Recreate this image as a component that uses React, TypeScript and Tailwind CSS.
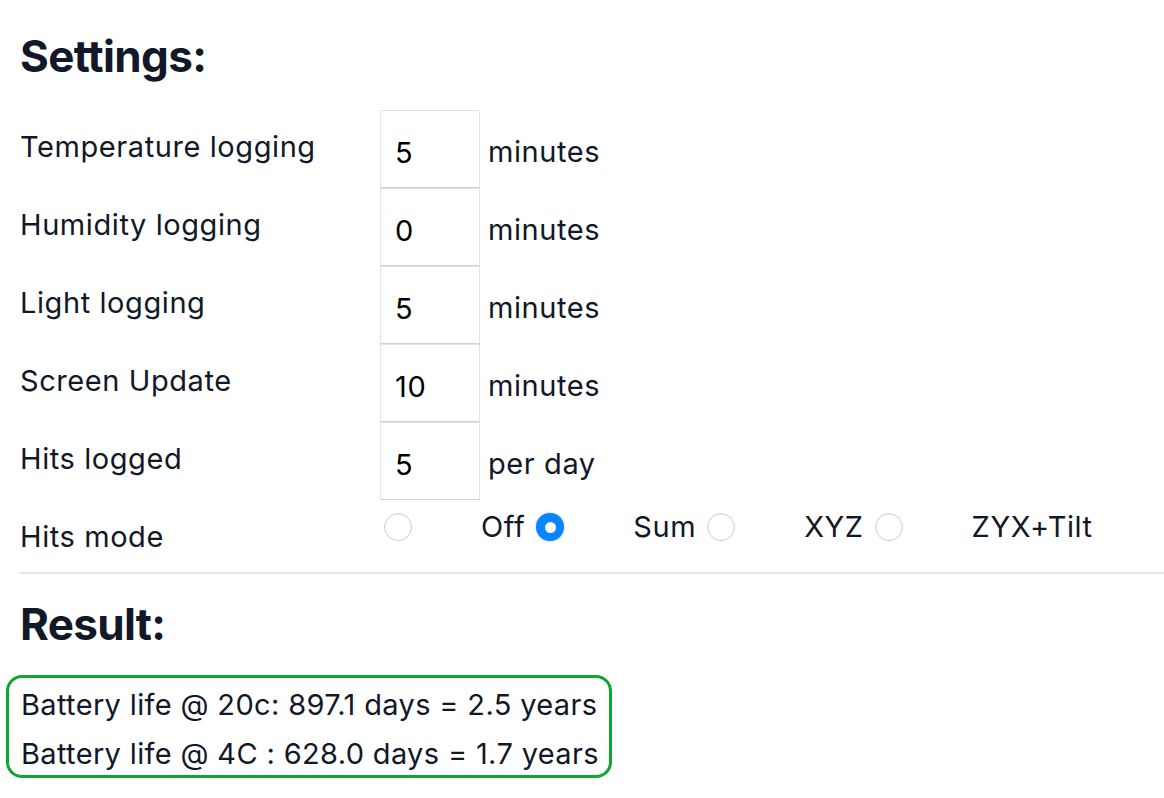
import React from "react";

const rows = [
  { label: "Temperature logging", value: "5", unit: "minutes" },
  { label: "Humidity logging", value: "0", unit: "minutes" },
  { label: "Light logging", value: "5", unit: "minutes" },
  { label: "Screen Update", value: "10", unit: "minutes" },
  { label: "Hits logged", value: "5", unit: "per day" },
];

const modes = [
  { label: "Off", checkedAfter: true },
  { label: "Sum", checkedAfter: false },
  { label: "XYZ", checkedAfter: false },
  { label: "ZYX+Tilt", checkedAfter: false },
];

function Radio({ checked }: { checked: boolean }) {
  if (checked) {
    return (
      <span className="flex h-[28px] w-[28px] shrink-0 items-center justify-center rounded-full bg-[#0a84ff] shadow-[0_0_2px_rgba(10,132,255,0.5)]">
        <span className="h-[11px] w-[11px] rounded-full bg-white" />
      </span>
    );
  }
  return (
    <span className="block h-[28px] w-[28px] shrink-0 rounded-full border border-[#cfcfcf] bg-white shadow-[inset_0_1px_2px_rgba(0,0,0,0.06)]" />
  );
}

export default function App() {
  return (
    <div className="min-h-screen bg-white pl-5 font-['Inter',sans-serif] text-[#111827]">
      <h1 className="pt-[34px] text-[44px] font-bold leading-[44px] tracking-[-0.015em]">
        Settings:
      </h1>

      <div className="mt-[32px] flex flex-col text-[29px] leading-[34px] tracking-[0.02em]">
        {rows.map((r) => (
          <div key={r.label} className="flex h-[78px]">
            <div className="w-[360px] pt-[20px]">{r.label}</div>
            <input
              readOnly
              value={r.value}
              className="box-border h-[78px] w-[100px] border border-[#e3e3e3] border-b-[#cfcfcf] bg-white pl-[14px] pt-[6px] font-['Inter',sans-serif] text-[29px] leading-[34px] text-black outline-none"
            />
            <div className="ml-2 pt-[25px]">{r.unit}</div>
          </div>
        ))}

        <div className="flex">
          <div className="w-[360px] pt-[20px]">Hits mode</div>
          <div className="ml-1 mt-[10px] flex h-[34px] items-center">
            <Radio checked={false} />
            {modes.map((m, i) => (
              <React.Fragment key={m.label}>
                <span className="ml-[69px]">{m.label}</span>
                {i < modes.length - 1 && (
                  <span className="ml-[11px]">
                    <Radio checked={m.checkedAfter} />
                  </span>
                )}
              </React.Fragment>
            ))}
          </div>
        </div>
      </div>

      <div className="mt-[18px] h-[2px] bg-[#e6e6e6]" />

      <h1 className="mt-[28px] text-[44px] font-bold leading-[44px] tracking-[-0.015em]">
        Result:
      </h1>

      <div className="-ml-[14px] mt-[29px] box-border h-[103px] w-[606px] rounded-[16px] border-[3px] border-[#0aa82e] pl-[12px] pt-[2px] text-[29px] leading-[49px] tracking-[0.012em]">
        <div>Battery life @ 20c: 897.1 days = 2.5 years</div>
        <div>Battery life @ 4C : 628.0 days = 1.7 years</div>
      </div>
    </div>
  );
}
